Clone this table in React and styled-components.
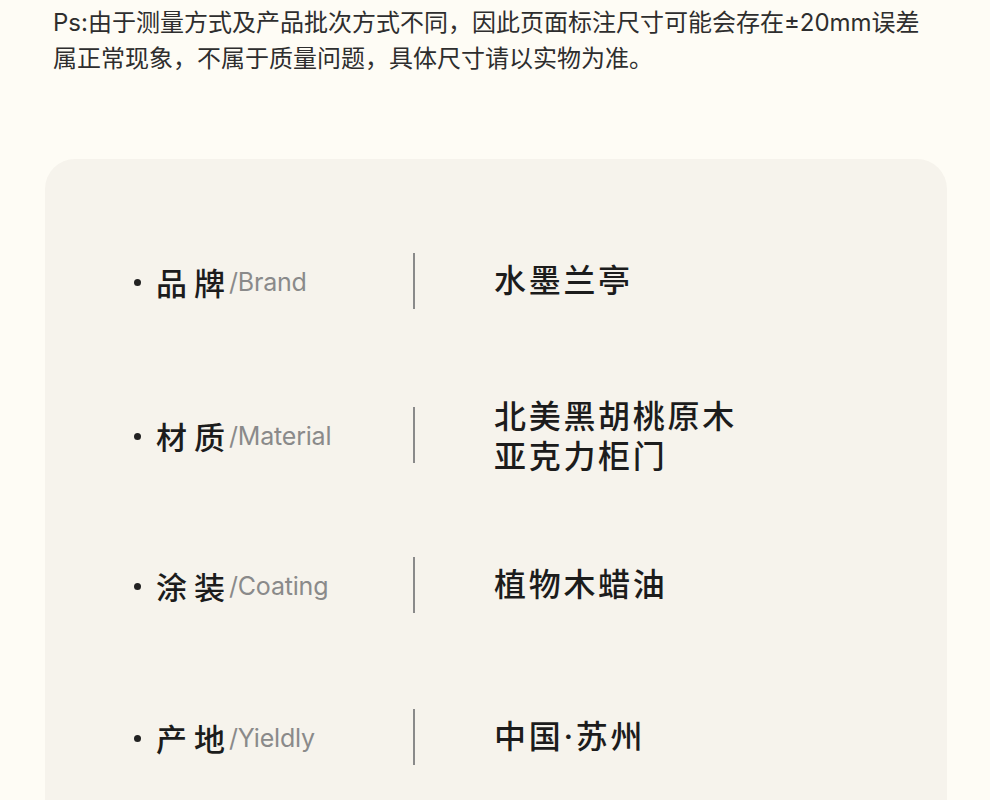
import React from 'react';
import styled, { createGlobalStyle } from 'styled-components';

const GlobalStyle = createGlobalStyle`
  html, body {
    margin: 0;
    padding: 0;
    background: #fefcf5;
  }
  body {
    font-family: 'Inter', 'Noto Sans CJK SC', sans-serif;
    overflow: hidden;
  }
`

const Page = styled.div`
  width: 990px;
  height: 800px;
  overflow: hidden;
  background: #fefcf5;
`

const Note = styled.p`
  margin: 0;
  padding: 5px 0 0 53px;
  font-size: 24px;
  line-height: 36px;
  color: #2e2e2e;
  font-weight: 400;
  white-space: nowrap;
`

const Card = styled.div`
  margin: 82px 0 0 45px;
  width: 902px;
  height: 700px;
  background: #f6f3ec;
  border-radius: 30px;
  padding: 46px 0 0 0;
  box-sizing: border-box;
`

const Row = styled.div`
  height: 152px;
  margin-top: ${(p) => p.$shift || 0}px;
  margin-bottom: ${(p) => -(p.$shift || 0)}px;
  display: grid;
  grid-template-columns: 279px 2px 1fr;
  align-items: center;
  padding-left: 89px;
`

const Label = styled.div`
  display: flex;
  align-items: center;
`

const Dot = styled.span`
  width: 7px;
  height: 7px;
  border-radius: 50%;
  background: #222;
  margin: 2px 15px 0 0;
`

const LabelCn = styled.span`
  font-size: 31px;
  font-weight: 500;
  letter-spacing: 7px;
  color: #1c1c1c;
  margin-right: -3px;
`

const LabelEn = styled.span`
  font-size: 25px;
  color: #8a8a8a;
  letter-spacing: -0.2px;
  margin-top: 2px;
`

const Divider = styled.div`
  width: 2px;
  height: 56px;
  background: #8a8a8a;
`

const Value = styled.div`
  margin-left: 79px;
  padding-top: ${(p) => (p.$multi ? 4 : 0)}px;
  font-size: 32px;
  line-height: 40px;
  font-weight: 500;
  letter-spacing: 2.7px;
  color: #1c1c1c;
`

const specs = [
  { cn: '品牌', en: '/Brand', value: ['水墨兰亭'] },
  { cn: '材质', en: '/Material', value: ['北美黑胡桃原木', '亚克力柜门'], shift: 2 },
  { cn: '涂装', en: '/Coating', value: ['植物木蜡油'] },
  { cn: '产地', en: '/Yieldly', value: ['中国·苏州'] },
]

const App = () => (
  <Page>
    <GlobalStyle />
    <Note>
      Ps:由于测量方式及产品批次方式不同，因此页面标注尺寸可能会存在±20mm误差
      <br />
      属正常现象，不属于质量问题，具体尺寸请以实物为准。
    </Note>
    <Card>
      {specs.map((s) => (
        <Row key={s.cn} $shift={s.shift}>
          <Label>
            <Dot />
            <LabelCn>{s.cn}</LabelCn>
            <LabelEn>{s.en}</LabelEn>
          </Label>
          <Divider />
          <Value $multi={s.value.length > 1}>
            {s.value.map((v) => (
              <div key={v}>{v}</div>
            ))}
          </Value>
        </Row>
      ))}
    </Card>
  </Page>
);

export default App;
